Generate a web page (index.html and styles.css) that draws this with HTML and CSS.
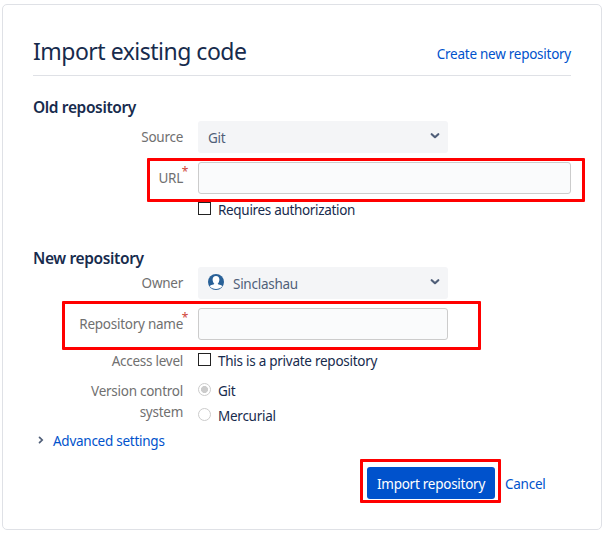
FILE: index.html
```html
<!DOCTYPE html>
<html lang="en">
<head>
<meta charset="utf-8">
<title>Import existing code</title>
<link rel="stylesheet" href="styles.css">
</head>
<body>
<main class="card">
  <header class="header">
    <h1>Import existing code</h1>
    <a class="link" href="#">Create new repository</a>
  </header>
  <form>
    <section class="section">
      <h2>Old repository</h2>
      <div class="row">
        <label class="label">Source</label>
        <div class="select"><span>Git</span>
          <svg class="chevron" width="10" height="8" viewBox="0 0 10 8"><path d="M1.7 2.2 5 5.2 8.3 2.2" fill="none" stroke="#505f79" stroke-width="2.2" stroke-linecap="round" stroke-linejoin="round"/></svg>
        </div>
      </div>
      <div class="row row-input">
        <label class="label required" for="url">URL</label>
        <input class="input wide" id="url" type="text">
        <span class="mark mark-url"></span>
      </div>
      <div class="option auth"><span class="box"></span><span>Requires authorization</span></div>
    </section>
    <section class="section section-new">
      <h2>New repository</h2>
      <div class="row">
        <label class="label">Owner</label>
        <div class="select">
          <svg class="avatar" width="16" height="16" viewBox="0 0 16 16"><circle cx="8" cy="8" r="8" fill="#296198"/><path d="M8 1.900c-2.200 0-3.400 1.500-3.400 3.700 0 1.800.8 3.300 1.700 4.100-.3.700-1.500.8-2.900 1.200-.9.300-1.400.7-1.700 1.400C3.100 14 5.500 15 8 15s4.900-1 6.300-2.700c-.3-.7-.8-1.100-1.700-1.400-1.400-.4-2.600-.5-2.900-1.200.9-.8 1.700-2.300 1.700-4.100 0-2.200-1.200-3.700-3.400-3.700z" fill="#fff"/></svg>
          <span>Sinclashau</span>
          <svg class="chevron" width="10" height="8" viewBox="0 0 10 8"><path d="M1.7 2.2 5 5.2 8.3 2.2" fill="none" stroke="#505f79" stroke-width="2.2" stroke-linecap="round" stroke-linejoin="round"/></svg>
        </div>
      </div>
      <div class="row row-input">
        <label class="label required" for="name">Repository name</label>
        <input class="input" id="name" type="text">
        <span class="mark mark-name"></span>
      </div>
      <div class="row access">
        <span class="label">Access level</span>
        <div class="option"><span class="box"></span><span>This is a private repository</span></div>
      </div>
      <div class="row vcs">
        <span class="label">Version control<br>system</span>
        <div class="radios">
          <div class="option"><span class="radio on"></span><span>Git</span></div>
          <div class="option"><span class="radio"></span><span>Mercurial</span></div>
        </div>
      </div>
      <a class="link advanced" href="#"><svg width="6" height="8" viewBox="0 0 6 8"><path d="M1.500 1.300 4.200 4 1.500 6.700" fill="none" stroke="#505f79" stroke-width="1.700" stroke-linecap="round"/></svg><span>Advanced settings</span></a>
    </section>
    <div class="actions">
      <button class="primary" type="button">Import repository<span class="mark mark-button"></span></button>
      <a class="link" href="#">Cancel</a>
    </div>
  </form>
</main>
</body>
</html>
```
FILE: styles.css
```css
* { box-sizing: border-box; }
body {
  margin: 0;
  background: #fff;
  color: #172b4d;
  font: 13.5px/20px "Noto Sans", "Open Sans", sans-serif;
  letter-spacing: -0.26px;
}
h1, h2 { margin: 0; white-space: nowrap; }
.card {
  width: 600px;
  height: 526px;
  margin: 4px 0 0 2px;
  padding: 30px 30px 0;
  border: 1px solid #dfe1e6;
  border-radius: 5px;
}
.header {
  display: flex;
  justify-content: space-between;
  height: 41px;
  border-bottom: 1px solid #dfe1e6;
}
h1 { font-size: 23px; font-weight: 400; line-height: 32px; letter-spacing: -0.5px; }
.header .link { margin-top: 9px; }
.link { color: #0052cc; text-decoration: none; white-space: nowrap; }
h2 { height: 24px; font-size: 15.5px; font-weight: 600; line-height: 24px; letter-spacing: -0.37px; }
.section { padding-top: 19px; }
.section h2 { margin-bottom: 2px; }
.section-new h2 { margin-bottom: -3px; }
.row { position: relative; display: flex; height: 32px; }
.label {
  position: relative;
  width: 150px;
  margin-right: 15px;
  padding-top: 6px;
  color: #707070;
  text-align: right;
}
.required::after {
  content: "*";
  position: absolute;
  top: 0;
  right: -5px;
  color: #d04437;
  font-size: 12px;
}
.select {
  display: flex;
  align-items: center;
  width: 250px;
  padding: 2px 8px 0 10px;
  border-radius: 3px;
  background: #f4f5f7;
  color: #505f79;
}
.chevron { margin: -5px 0 0 auto; }
.avatar { margin: -5px 9px 0 0; }
.row-input { margin-top: 9px; }
.input {
  width: 250px;
  height: 32px;
  border: 1px solid #ccc;
  border-radius: 3px;
  background: #fafbfc;
  outline: 0;
}
.wide { width: 373px; }
.option { display: flex; align-items: flex-start; height: 20px; white-space: nowrap; }
.auth { margin: 6px 0 7px 165px; letter-spacing: -0.32px; }
.box { flex: none; width: 13px; height: 13px; margin: 2px 7px 0 0; border: 1px solid #222; background: #fff; }
.radio { flex: none; width: 13px; height: 13px; margin: 2px 7px 0 0; border: 1px solid #ccc; border-radius: 50%; background: #fff; }
.on { background: radial-gradient(circle, #ccc 0 3.2px, #fff 3.8px); }
.access { height: 20px; margin-top: 11px; }
.access .label, .vcs .label { padding-top: 0; }
.vcs { height: 45px; margin-top: 10px; }
.vcs .label { line-height: 20.5px; }
.radios { display: grid; gap: 5px; align-content: start; }
.advanced { display: flex; align-items: center; width: 140px; height: 20px; margin: 5px 0 0 5px; }
.advanced svg { margin: -2px 9px 0 0; }
.actions { display: flex; align-items: center; height: 32px; margin: 16px 0 0 334px; }
.actions .link { margin: 2px 0 0 10px; }
.primary {
  position: relative;
  width: 128px;
  height: 32px;
  padding: 2px 0 0;
  border: 0;
  border-radius: 3px;
  background: #0052cc;
  color: #fff;
  font: inherit;
  letter-spacing: inherit;
  white-space: nowrap;
}
.mark { position: absolute; border: 3px solid #f00; border-radius: 1px; pointer-events: none; }
.mark-url { inset: -4px -14px -8px 114px; }
.mark-name { inset: -7px 90px -10px 29px; }
.mark-button { inset: -8px -6px -4px -7px; }
```
